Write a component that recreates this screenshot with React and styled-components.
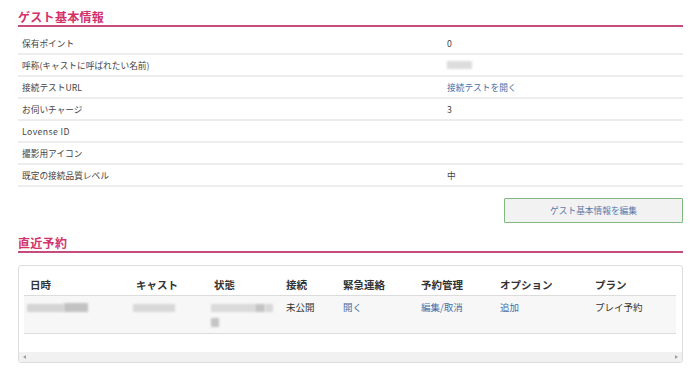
import React from 'react'
import styled, { createGlobalStyle } from 'styled-components'

const GlobalStyle = createGlobalStyle`
  body {
    margin: 0;
    background: #fff;
    font-family: "Noto Sans CJK JP", "Noto Sans", sans-serif;
    color: #444;
  }
`

const info = [
  { label: '保有ポイント', value: '0' },
  { label: '呼称(キャストに呼ばれたい名前)', blur: true },
  { label: '接続テストURL', value: '接続テストを開く', link: true },
  { label: 'お伺いチャージ', value: '3' },
  { label: 'Lovense ID', latin: true },
  { label: '撮影用アイコン' },
  { label: '既定の接続品質レベル', value: '中' },
]

const cols = [
  { title: '日時', w: 106 },
  { title: 'キャスト', w: 78 },
  { title: '状態', w: 72 },
  { title: '接続', w: 57 },
  { title: '緊急連絡', w: 78 },
  { title: '予約管理', w: 79 },
  { title: 'オプション', w: 95 },
  { title: 'プラン', w: 87 },
]

function App() {
  return (
    <Page>
      <GlobalStyle />
      <Title>ゲスト基本情報</Title>
      <InfoList>
        {info.map((row) => (
          <InfoRow key={row.label}>
            <Label latin={row.latin}>{row.label}</Label>
            <Value link={row.link}>
              {row.blur ? <Blur w={25} h={8} tone="#dcdcdc" /> : row.value}
            </Value>
          </InfoRow>
        ))}
      </InfoList>
      <ButtonRow>
        <EditButton>ゲスト基本情報を編集</EditButton>
      </ButtonRow>

      <Title second>直近予約</Title>
      <TableBox>
        <TableWrap>
          <Table>
            <colgroup>
              {cols.map((c) => (
                <col key={c.title} style={{ width: c.w }} />
              ))}
            </colgroup>
            <thead>
              <tr>
                {cols.map((c) => (
                  <Th key={c.title}>{c.title}</Th>
                ))}
              </tr>
            </thead>
            <tbody>
              <DataRow>
                <Td>
                  <BlurLine>
                    <Blur w={37} h={8} tone="#d4d4d4" />
                    <Blur w={24} h={9} tone="#c2c2c2" />
                  </BlurLine>
                </Td>
                <Td>
                  <BlurLine>
                    <Blur w={42} h={8} tone="#d8d8d8" />
                  </BlurLine>
                </Td>
                <Td>
                  <BlurLine>
                    <Blur w={44} h={8} tone="#dadada" />
                    <Blur w={10} h={8} tone="#c4c4c4" />
                    <Blur w={8} h={8} tone="#d8d8d8" />
                  </BlurLine>
                  <BlurLine>
                    <Blur w={8} h={9} tone="#c4c4c4" />
                  </BlurLine>
                </Td>
                <Td>未公開</Td>
                <Td><Link>開く</Link></Td>
                <Td><Link>編集/取消</Link></Td>
                <Td><Link>追加</Link></Td>
                <Td>プレイ予約</Td>
              </DataRow>
            </tbody>
          </Table>
        </TableWrap>
        <ScrollBar>
          <Arrow />
          <Arrow right />
        </ScrollBar>
      </TableBox>
    </Page>
  )
}

export default App

const Page = styled.div`
  width: 665px;
  padding: 8px 17px 0 18px;
`

const Title = styled.h2`
  margin: ${(p) => (p.second ? '11px' : '0')} 0 0;
  font-size: 12px;
  font-weight: bold;
  line-height: 17px;
  color: #d2336b;
  border-bottom: 2px solid #c64c7f;
  padding-bottom: 0;
  letter-spacing: 0.3px;
`

const InfoList = styled.div`
  margin-top: 6px;
`

const InfoRow = styled.div`
  display: grid;
  grid-template-columns: 429px 1fr;
  height: 20px;
  align-items: center;
  border-bottom: 2px solid #ededed;
  font-size: 8.7px;
`

const Label = styled.div`
  padding-left: 4px;
  color: #444;
  letter-spacing: ${(p) => (p.latin ? '0.4px' : '0')};
`

const Value = styled.div`
  color: ${(p) => (p.link ? '#4a6ea5' : '#444')};
  display: flex;
  align-items: center;
`

const ButtonRow = styled.div`
  display: flex;
  justify-content: flex-end;
  margin-top: 11px;
`

const EditButton = styled.button`
  width: 179px;
  height: 25px;
  background: #f2f2f2;
  border: 1px solid #7fb97f;
  border-radius: 1px;
  color: #5a79ab;
  font-family: "Noto Sans CJK JP", sans-serif;
  font-size: 8.7px;
  padding: 0;
`

const TableBox = styled.div`
  margin-top: 12px;
  border: 1px solid #dcdcdc;
  border-radius: 3px;
  overflow: hidden;
`

const TableWrap = styled.div`
  padding: 0 6px 18px 5px;
`

const Table = styled.table`
  width: 652px;
  table-layout: fixed;
  border-collapse: collapse;
`

const Th = styled.th`
  text-align: left;
  font-size: 10.5px;
  font-weight: bold;
  color: #333;
  line-height: 14px;
  padding: 12px 6px 3px;
  border-bottom: 1px solid #dcdcdc;
  white-space: nowrap;
`

const DataRow = styled.tr`
  background: #f7f7f7;
  border-bottom: 1px solid #dcdcdc;
`

const Td = styled.td`
  vertical-align: top;
  font-size: 9.5px;
  color: #333;
  line-height: 15px;
  padding: 4px 6px 3px;
  white-space: nowrap;
`

const Link = styled.span`
  color: #4a6ea5;
`

const BlurLine = styled.div`
  display: flex;
  align-items: center;
  height: 15px;
  margin-left: -3px;
`

const Blur = styled.span`
  display: inline-block;
  width: ${(p) => p.w}px;
  height: ${(p) => p.h}px;
  background: ${(p) => p.tone};
  filter: blur(1px);
`

const ScrollBar = styled.div`
  height: 10px;
  background: #f1f1f1;
  display: flex;
  align-items: center;
  justify-content: space-between;
  padding: 0 4px;
`

const Arrow = styled.span`
  width: 0;
  height: 0;
  border-top: 2px solid transparent;
  border-bottom: 2px solid transparent;
  ${(p) =>
    p.right
      ? 'border-left: 3px solid #a0a0a0;'
      : 'border-right: 3px solid #a0a0a0;'}
`
